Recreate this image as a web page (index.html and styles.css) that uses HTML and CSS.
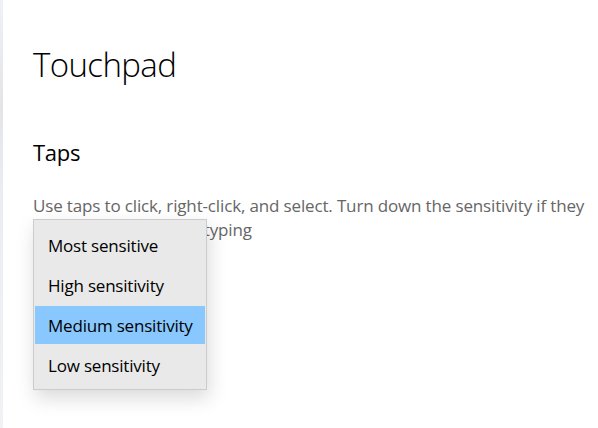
FILE: index.html
```html
<!DOCTYPE html>
<html>
<head>
<meta charset="utf-8">
<link rel="stylesheet" href="styles.css">
</head>
<body>
<div class="app">
  <div class="edge"></div>
  <main class="content">
    <h1 class="title">Touchpad</h1>
    <h2 class="section">Taps</h2>
    <p class="desc">Use taps to click, right-click, and select. Turn down the sensitivity if they click by mistake while typing</p>
    <div class="flyout">
      <div class="item">Most sensitive</div>
      <div class="item">High sensitivity</div>
      <div class="item selected">Medium sensitivity</div>
      <div class="item">Low sensitivity</div>
    </div>
  </main>
</div>
</body>
</html>
```

FILE: styles.css
```css
html, body {
  margin: 0;
  padding: 0;
  background: #ffffff;
}
.app {
  display: flex;
  width: 598px;
  height: 428px;
  overflow: hidden;
  font-family: "Open Sans", "Noto Sans", sans-serif;
}
.edge {
  width: 3px;
  flex: none;
  background: linear-gradient(180deg, #eef1f5 0%, #e2e4e8 25%, #e9edf2 45%, #f0f2f4 100%);
}
.content {
  position: relative;
  flex: 1;
  padding-left: 30px;
}
.title {
  margin: 42px 0 0 0;
  font-size: 33px;
  font-weight: 300;
  line-height: 46px;
  color: #000;
  letter-spacing: -0.6px;
}
.section {
  margin: 49px 0 0 0;
  font-size: 22px;
  font-weight: 400;
  line-height: 30px;
  color: #000;
  letter-spacing: -0.3px;
}
.desc {
  margin: 27px 0 0 0;
  width: 564px;
  font-size: 17px;
  line-height: 24px;
  color: #666666;
  letter-spacing: -0.15px;
}
.flyout {
  position: absolute;
  left: 30px;
  top: 219px;
  width: 172px;
  display: flex;
  flex-direction: column;
  padding: 5px 0 4px 0;
  background: #e9e9e9;
  border: 1px solid #cccccc;
  box-shadow: 2px 8px 18px rgba(0, 0, 0, 0.15);
}
.item {
  height: 38px;
  margin: 1px;
  padding-left: 13px;
  display: flex;
  align-items: center;
  font-size: 17px;
  color: #000;
  letter-spacing: -0.2px;
}
.item.selected {
  background: #88c8ff;
}
```
